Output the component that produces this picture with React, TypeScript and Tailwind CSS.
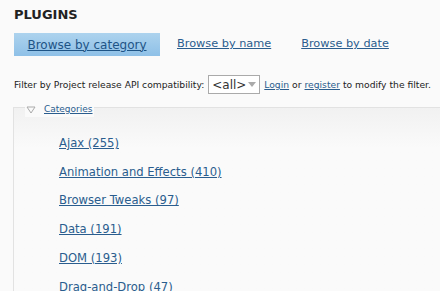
export default function App() {
  const categories = [
    "Ajax (255)",
    "Animation and Effects (410)",
    "Browser Tweaks (97)",
    "Data (191)",
    "DOM (193)",
    "Drag-and-Drop (47)",
  ];

  return (
    <div
      className="h-[291px] w-[440px] overflow-hidden bg-[#fafafa] text-[#333]"
      style={{ fontFamily: '"DejaVu Sans", Verdana, sans-serif' }}
    >
      <h1 className="pl-[14px] pt-[7px] text-[13px] font-bold leading-[16px] text-[#222]">PLUGINS</h1>

      {/* TABS */}
      <div className="mt-[10px] flex items-center pl-[14px] text-[12px]">
        <a className="flex h-[23px] w-[146px] items-center justify-center bg-gradient-to-b from-[#add3ee] to-[#8ec0e7] text-[#1e5486] underline">
          Browse by category
        </a>
        <a className="ml-[17px] text-[11.3px] text-[#2a5d8e] underline">Browse by name</a>
        <a className="ml-[30px] text-[11.3px] text-[#2a5d8e] underline">Browse by date</a>
      </div>

      {/* FILTER */}
      <div className="mt-[19px] flex items-center pl-[14px] text-[9.2px] text-[#222]">
        <span>Filter by Project release API compatibility:</span>
        <span className="ml-[4px] flex h-[19px] w-[52px] items-center justify-between border border-[#aaa] bg-white pl-[3px] pr-[3px] text-[12px] text-[#333]">
          &lt;all&gt;
          <svg width="8" height="5" viewBox="0 0 8 5">
            <path d="M0 0 L8 0 L4 5 Z" fill="#aaa" />
          </svg>
        </span>
        <a className="ml-[4px] text-[#2a5d8e] underline">Login</a>
        <span className="ml-[3px]">or</span>
        <a className="ml-[3px] text-[#2a5d8e] underline">register</a>
        <span className="ml-[3px]">to modify the filter.</span>
      </div>

      {/* FIELDSET */}
      <div className="relative ml-[13px] mt-[13px] h-[200px] border-l border-t border-[#e2e2e2] bg-gradient-to-b from-[#f1f1f1] to-[#fafafa] to-[40px]">
        <div className="absolute left-[11px] top-[-5px] flex items-center bg-[#fafafa] px-[1px] text-[9px]">
          <svg width="10" height="8" viewBox="0 0 10 8" className="mr-[8px]">
            <path d="M1 1 L9 1 L5 7 Z" fill="none" stroke="#aaa" strokeWidth="1" />
          </svg>
          <a className="text-[#2a5d8e] underline">Categories</a>
        </div>
        <ul className="pl-[45px] pt-[21px] text-[11.6px] leading-[28.7px]">
          {categories.map((c) => (
            <li key={c}>
              <a className="text-[#2a5d8e] underline">{c}</a>
            </li>
          ))}
        </ul>
      </div>
    </div>
  );
}
